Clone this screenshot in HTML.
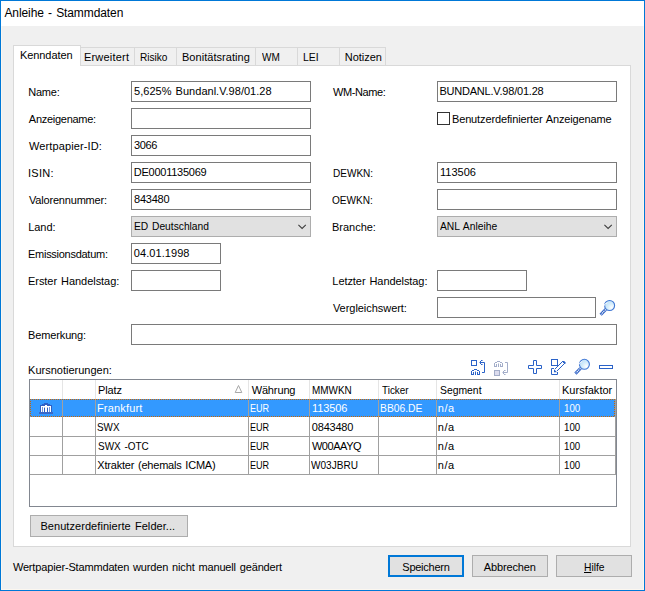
<!DOCTYPE html>
<html lang="de"><head><meta charset="utf-8"><title>Anleihe - Stammdaten</title>
<style>
html,body{margin:0;padding:0;}
body{width:645px;height:591px;position:relative;overflow:hidden;background:#f0f0f0;font-family:"Liberation Sans",sans-serif;font-size:11px;}
.b{position:absolute;box-sizing:border-box;display:block;}
.t{position:absolute;white-space:nowrap;line-height:16px;font-size:11px;transform-origin:0 0;word-spacing:1px;}
</style></head><body>
<div class="b" style="left:0px;top:0px;width:645px;height:591px;background:#f0f0f0;border:1px solid #0078d7;"></div>
<div class="b" style="left:1px;top:26px;width:643px;height:564px;border:1px solid #fcf7ef;border-top:none;"></div>
<div class="b" style="left:1px;top:1px;width:643px;height:25px;background:#fff;"></div>
<div class="b" style="left:13px;top:65px;width:618px;height:482px;background:#fff;border:1px solid #d9d9d9;"></div>
<div class="b" style="left:80px;top:47px;width:55px;height:19px;background:#f0f0f0;border:1px solid #d9d9d9;"></div>
<div class="b" style="left:134px;top:47px;width:43px;height:19px;background:#f0f0f0;border:1px solid #d9d9d9;"></div>
<div class="b" style="left:176px;top:47px;width:80px;height:19px;background:#f0f0f0;border:1px solid #d9d9d9;"></div>
<div class="b" style="left:255px;top:47px;width:43px;height:19px;background:#f0f0f0;border:1px solid #d9d9d9;"></div>
<div class="b" style="left:297px;top:47px;width:43px;height:19px;background:#f0f0f0;border:1px solid #d9d9d9;"></div>
<div class="b" style="left:339px;top:47px;width:47px;height:19px;background:#f0f0f0;border:1px solid #d9d9d9;"></div>
<div class="b" style="left:13px;top:45px;width:68px;height:21px;background:#fff;border:1px solid #d9d9d9;border-bottom:none;"></div>
<div class="b" style="left:131px;top:81px;width:180px;height:21px;background:#fff;border:1px solid #7a7a7a;"></div>
<div class="b" style="left:131px;top:108px;width:180px;height:21px;background:#fff;border:1px solid #7a7a7a;"></div>
<div class="b" style="left:131px;top:135px;width:180px;height:21px;background:#fff;border:1px solid #7a7a7a;"></div>
<div class="b" style="left:131px;top:162px;width:180px;height:21px;background:#fff;border:1px solid #7a7a7a;"></div>
<div class="b" style="left:131px;top:189px;width:180px;height:21px;background:#fff;border:1px solid #7a7a7a;"></div>
<div class="b" style="left:131px;top:216px;width:180px;height:21px;background:#e1e1e1;border:1px solid #adadad;"></div>
<div class="b" style="left:131px;top:243px;width:90px;height:21px;background:#fff;border:1px solid #7a7a7a;"></div>
<div class="b" style="left:131px;top:270px;width:90px;height:21px;background:#fff;border:1px solid #7a7a7a;"></div>
<div class="b" style="left:131px;top:324px;width:486px;height:21px;background:#fff;border:1px solid #7a7a7a;"></div>
<div class="b" style="left:437px;top:81px;width:180px;height:21px;background:#fff;border:1px solid #7a7a7a;"></div>
<div class="b" style="left:437px;top:162px;width:180px;height:21px;background:#fff;border:1px solid #7a7a7a;"></div>
<div class="b" style="left:437px;top:189px;width:180px;height:21px;background:#fff;border:1px solid #7a7a7a;"></div>
<div class="b" style="left:437px;top:216px;width:180px;height:21px;background:#e1e1e1;border:1px solid #adadad;"></div>
<div class="b" style="left:437px;top:270px;width:90px;height:21px;background:#fff;border:1px solid #7a7a7a;"></div>
<div class="b" style="left:437px;top:297px;width:159px;height:21px;background:#fff;border:1px solid #7a7a7a;"></div>
<div class="b" style="left:437px;top:112px;width:13px;height:13px;background:#fff;border:1px solid #333;"></div>
<svg class="b" style="left:297px;top:223px" width="11" height="7" viewBox="0 0 11 7"><path d="M1.4 1.9 L5.1 5.5 L8.8 1.9" fill="none" stroke="#3c3c3c" stroke-width="1.05"/></svg>
<svg class="b" style="left:603px;top:223px" width="11" height="7" viewBox="0 0 11 7"><path d="M1.4 1.9 L5.1 5.5 L8.8 1.9" fill="none" stroke="#3c3c3c" stroke-width="1.05"/></svg>
<div class="b" style="left:29px;top:379px;width:588px;height:128px;background:#fff;border:1px solid #828790;"></div>
<div class="b" style="left:30px;top:399px;width:585px;height:18px;background:#3399ff;"></div>
<div class="b" style="left:30px;top:436px;width:586px;height:1px;background:#a0a0a0;"></div>
<div class="b" style="left:30px;top:455px;width:586px;height:1px;background:#a0a0a0;"></div>
<div class="b" style="left:30px;top:474px;width:586px;height:1px;background:#a0a0a0;"></div>
<div class="b" style="left:62px;top:399px;width:1px;height:76px;background:#a0a0a0;"></div>
<div class="b" style="left:95px;top:399px;width:1px;height:76px;background:#a0a0a0;"></div>
<div class="b" style="left:248px;top:399px;width:1px;height:76px;background:#a0a0a0;"></div>
<div class="b" style="left:309px;top:399px;width:1px;height:76px;background:#a0a0a0;"></div>
<div class="b" style="left:378px;top:399px;width:1px;height:76px;background:#a0a0a0;"></div>
<div class="b" style="left:436px;top:399px;width:1px;height:76px;background:#a0a0a0;"></div>
<div class="b" style="left:559px;top:399px;width:1px;height:76px;background:#a0a0a0;"></div>
<div class="b" style="left:615px;top:399px;width:1px;height:76px;background:#a0a0a0;"></div>
<div class="b" style="left:62px;top:380px;width:1px;height:19px;background:#e5e5e5;"></div>
<div class="b" style="left:95px;top:380px;width:1px;height:19px;background:#e5e5e5;"></div>
<div class="b" style="left:248px;top:380px;width:1px;height:19px;background:#e5e5e5;"></div>
<div class="b" style="left:309px;top:380px;width:1px;height:19px;background:#e5e5e5;"></div>
<div class="b" style="left:378px;top:380px;width:1px;height:19px;background:#e5e5e5;"></div>
<div class="b" style="left:436px;top:380px;width:1px;height:19px;background:#e5e5e5;"></div>
<div class="b" style="left:559px;top:380px;width:1px;height:19px;background:#e5e5e5;"></div>
<div class="b" style="left:30px;top:399px;width:585px;height:1px;background:repeating-linear-gradient(90deg,#cc6600 0,#cc6600 1px,transparent 1px,transparent 2px);"></div>
<div class="b" style="left:31px;top:416px;width:584px;height:1px;background:repeating-linear-gradient(90deg,#cc6600 0,#cc6600 1px,transparent 1px,transparent 2px);"></div>
<div class="b" style="left:30px;top:399px;width:1px;height:18px;background:repeating-linear-gradient(180deg,#cc6600 0,#cc6600 1px,transparent 1px,transparent 2px);"></div>
<div class="b" style="left:614px;top:399px;width:1px;height:18px;background:repeating-linear-gradient(180deg,#cc6600 0,#cc6600 1px,transparent 1px,transparent 2px);"></div>
<svg class="b" style="left:234px;top:384px" width="10" height="10" viewBox="0 0 10 10"><path d="M4.5 1.5 L7.8 8.5 L1.2 8.5 Z" fill="#fff" stroke="#a8a8a8" stroke-width="1"/></svg>
<div class="b" style="left:30px;top:515px;width:158px;height:22px;background:#e1e1e1;border:1px solid #adadad;"></div>
<div class="b" style="left:388px;top:555px;width:76px;height:22px;background:#e1e1e1;border:1px solid #0078d7;border-width:2px;"></div>
<div class="b" style="left:472px;top:555px;width:76px;height:22px;background:#e1e1e1;border:1px solid #adadad;"></div>
<div class="b" style="left:556px;top:555px;width:76px;height:22px;background:#e1e1e1;border:1px solid #adadad;"></div>
<svg class="b" style="left:0;top:0" width="645" height="591" viewBox="0 0 645 591" fill="none">
<defs>
<radialGradient id="lens" cx="0.7" cy="0.72" r="0.75"><stop offset="0" stop-color="#fdfeff"/><stop offset="0.55" stop-color="#d3ecfb"/><stop offset="1" stop-color="#bfe0f8"/></radialGradient>
</defs>
<!-- icon 1: move up -->
<g stroke="#2a62c8" stroke-width="1">
<rect x="471.5" y="360.5" width="5" height="5"/>
<path d="M479.5 362.5H484.5V372.5H482"/><g stroke="none" fill="#2a62c8" shape-rendering="crispEdges"><rect x="480" y="361" width="1" height="1"/><rect x="481" y="360" width="1" height="1"/><rect x="482" y="360" width="1" height="1" opacity="0.55"/><rect x="480" y="363" width="1" height="1"/><rect x="481" y="364" width="1" height="1"/><rect x="482" y="364" width="1" height="1" opacity="0.55"/></g>
<g transform="translate(471 369)"><path d="M3 0.5H6M1 1.5H3M6 1.5H8M0.5 2V6M8.5 2V6M2.5 3V6M4.5 2.5V6M6.5 3V6M0 5.5H3M6 5.5H9"/></g>
</g>
<!-- icon 2: move down (disabled) -->
<g stroke="#a3adc9" stroke-width="1">
<rect x="494.5" y="370.5" width="5" height="5" fill="#dcdcee"/>
<path d="M505 362.5H507.5V372.5H502.5"/><g stroke="none" fill="#a3adc9" shape-rendering="crispEdges"><rect x="503" y="371" width="1" height="1"/><rect x="504" y="370" width="1" height="1"/><rect x="505" y="370" width="1" height="1" opacity="0.55"/><rect x="503" y="373" width="1" height="1"/><rect x="504" y="374" width="1" height="1"/><rect x="505" y="374" width="1" height="1" opacity="0.55"/></g>
<g transform="translate(494 361)"><path d="M3 0.5H6M1 1.5H3M6 1.5H8M0.5 2V6M8.5 2V6M2.5 3V6M4.5 2.5V6M6.5 3V6M0 5.5H3M6 5.5H9"/></g>
</g>
<!-- icon 3: plus -->
<path d="M533.5 360.5H536.5V365.5H541.5V368.5H536.5V373.5H533.5V368.5H528.5V365.5H533.5Z" stroke="#2a62c8"/>
<!-- icon 4: edit -->
<g stroke="#2a62c8" stroke-width="1">
<rect x="551.5" y="359.5" width="6" height="6"/>
<path d="M554 368.5H551.5V374.5H557.5V372"/>
<g fill="#2a62c8" stroke="none" shape-rendering="crispEdges"><rect x="555" y="368" width="1" height="1"/><rect x="556" y="367" width="1" height="1"/><rect x="557" y="366" width="1" height="1"/><rect x="558" y="365" width="1" height="1"/><rect x="559" y="364" width="1" height="1"/><rect x="560" y="363" width="1" height="1"/><rect x="561" y="362" width="1" height="1"/><rect x="562" y="361" width="1" height="1"/><rect x="557" y="370" width="1" height="1"/><rect x="558" y="369" width="1" height="1"/><rect x="559" y="368" width="1" height="1"/><rect x="560" y="367" width="1" height="1"/><rect x="561" y="366" width="1" height="1"/><rect x="562" y="365" width="1" height="1"/><rect x="563" y="364" width="1" height="1"/><rect x="564" y="363" width="1" height="1"/></g>
<path d="M554 372.2V369.2L557 372.2Z" fill="#2a62c8" stroke="none"/>
<path d="M563 360.9L564.2 360.9L565.6 362.4L565.6 363.5L564.6 364L563 362.3Z" fill="#2a62c8" stroke="none"/>
</g>
<!-- icon 5: magnifier -->
<g transform="translate(574 359)"><circle cx="10.4" cy="5.3" r="5" fill="url(#lens)" stroke="#4178d4" stroke-width="1.1"/>
<path d="M4.2 6.6Q5.2 3.2 8.2 2.4" stroke="#fff" stroke-width="1" opacity="0.9"/>
<path d="M6.6 9.2L1.4 14.6" stroke="#2f62c6" stroke-width="3"/>
<path d="M6.5 9.3L1.8 14.2" stroke="#fff" stroke-width="1.1" stroke-dasharray="1.3 0.7"/></g>
<!-- icon 6: minus -->
<rect x="599.5" y="365.5" width="13" height="3" stroke="#2a62c8"/>
<!-- magnifier next to Vergleichswert -->
<g transform="translate(599.2 300.2)"><circle cx="10.4" cy="5.3" r="5" fill="url(#lens)" stroke="#4178d4" stroke-width="1.1"/>
<path d="M4.2 6.6Q5.2 3.2 8.2 2.4" stroke="#fff" stroke-width="1" opacity="0.9"/>
<path d="M6.6 9.2L1.4 14.6" stroke="#2f62c6" stroke-width="3"/>
<path d="M6.5 9.3L1.8 14.2" stroke="#fff" stroke-width="1.1" stroke-dasharray="1.3 0.7"/></g>
<!-- building icon in selected row -->
<g shape-rendering="crispEdges">
<rect x="44" y="403" width="4" height="1" fill="#2f5fc4"/>
<rect x="42" y="404" width="8" height="1" fill="#2f5fc4"/>
<rect x="40" y="405" width="12" height="7" fill="#2f5fc4"/>
<rect x="39" y="412" width="14" height="2" fill="#3a68c8"/>
<g fill="#fff">
<rect x="41" y="406" width="4" height="1"/><rect x="41" y="407" width="1" height="5"/><rect x="43" y="407" width="1" height="5"/><rect x="44" y="407" width="1" height="1" opacity="0.6"/>
<rect x="47" y="406" width="4" height="1"/><rect x="50" y="407" width="1" height="5"/><rect x="48" y="407" width="1" height="5"/><rect x="47" y="407" width="1" height="1" opacity="0.6"/>
<rect x="45" y="405" width="2" height="7"/>
<rect x="42" y="407" width="1" height="5" opacity="0.35"/><rect x="49" y="407" width="1" height="5" opacity="0.35"/>
</g>
</g>
</svg>

<span class="t" id="title" style="left:4.44px;top:5.00px;color:#000;font-size:12px;letter-spacing:-0.098px;">Anleihe - Stammdaten</span>
<span class="t" id="tab1" style="left:19.88px;top:47.00px;color:#000;letter-spacing:-0.051px;">Kenndaten</span>
<span class="t" id="tab2" style="left:83.98px;top:49.00px;color:#000;letter-spacing:0.198px;">Erweitert</span>
<span class="t" id="tab3" style="left:140.01px;top:49.00px;color:#000;transform:scaleX(0.9178);">Risiko</span>
<span class="t" id="tab4" style="left:181.97px;top:49.00px;color:#000;letter-spacing:0.044px;">Bonitätsrating</span>
<span class="t" id="tab5" style="left:261.58px;top:49.00px;color:#000;transform:scaleX(0.9103);">WM</span>
<span class="t" id="tab6" style="left:303.49px;top:49.00px;color:#000;transform:scaleX(0.9485);">LEI</span>
<span class="t" id="tab7" style="left:344.84px;top:49.00px;color:#000;letter-spacing:-0.037px;">Notizen</span>
<span class="t" id="l1" style="left:28.18px;top:84.00px;color:#000;letter-spacing:-0.207px;">Name:</span>
<span class="t" id="l2" style="left:28.85px;top:111.00px;color:#000;letter-spacing:-0.278px;">Anzeigename:</span>
<span class="t" id="l3" style="left:28.97px;top:138.00px;color:#000;letter-spacing:0.113px;">Wertpapier-ID:</span>
<span class="t" id="l4" style="left:28.08px;top:165.00px;color:#000;letter-spacing:0.239px;">ISIN:</span>
<span class="t" id="l5" style="left:28.97px;top:192.00px;color:#000;letter-spacing:-0.186px;">Valorennummer:</span>
<span class="t" id="l6" style="left:28.27px;top:219.00px;color:#000;letter-spacing:-0.080px;">Land:</span>
<span class="t" id="l7" style="left:28.01px;top:246.00px;color:#000;letter-spacing:-0.272px;">Emissionsdatum:</span>
<span class="t" id="l8" style="left:28.01px;top:273.00px;color:#000;letter-spacing:-0.046px;">Erster Handelstag:</span>
<span class="t" id="l9" style="left:28.01px;top:327.00px;color:#000;letter-spacing:-0.128px;">Bemerkung:</span>
<span class="t" id="r1" style="left:333.07px;top:84.00px;color:#000;letter-spacing:-0.417px;">WM-Name:</span>
<span class="t" id="r2" style="left:332.62px;top:165.00px;color:#000;transform:scaleX(0.9128);">DEWKN:</span>
<span class="t" id="r3" style="left:332.28px;top:192.00px;color:#000;transform:scaleX(0.9170);">OEWKN:</span>
<span class="t" id="r4" style="left:332.06px;top:219.00px;color:#000;letter-spacing:-0.023px;">Branche:</span>
<span class="t" id="r5" style="left:332.34px;top:273.00px;color:#000;letter-spacing:-0.069px;">Letzter Handelstag:</span>
<span class="t" id="r6" style="left:332.94px;top:300.00px;color:#000;letter-spacing:-0.046px;">Vergleichswert:</span>
<span class="t" id="v1" style="left:134.12px;top:83.00px;color:#000;letter-spacing:0.020px;">5,625% Bundanl.V.98/01.28</span>
<span class="t" id="v3" style="left:134.08px;top:137.00px;color:#000;letter-spacing:-0.382px;">3066</span>
<span class="t" id="v4" style="left:133.82px;top:164.00px;color:#000;letter-spacing:-0.252px;">DE0001135069</span>
<span class="t" id="v5" style="left:134.11px;top:191.00px;color:#000;letter-spacing:-0.241px;">843480</span>
<span class="t" id="v6" style="left:134.39px;top:218.00px;color:#000;transform:scaleX(0.9312);">ED Deutschland</span>
<span class="t" id="v7" style="left:133.85px;top:245.00px;color:#000;letter-spacing:0.060px;">04.01.1998</span>
<span class="t" id="w1" style="left:439.38px;top:83.00px;color:#000;letter-spacing:-0.206px;">BUNDANL.V.98/01.28</span>
<span class="t" id="w2" style="left:439.98px;top:164.00px;color:#000;letter-spacing:0.026px;">113506</span>
<span class="t" id="w4" style="left:440.13px;top:218.00px;color:#000;transform:scaleX(0.9358);">ANL Anleihe</span>
<span class="t" id="cb" style="left:451.94px;top:111.00px;color:#000;letter-spacing:-0.130px;">Benutzerdefinierter Anzeigename</span>
<span class="t" id="kn" style="left:28.09px;top:362.00px;color:#000;letter-spacing:0.002px;">Kursnotierungen:</span>
<span class="t" id="h1" style="left:97.98px;top:382.00px;color:#000;letter-spacing:-0.118px;">Platz</span>
<span class="t" id="h2" style="left:251.64px;top:382.00px;color:#000;letter-spacing:-0.128px;">Währung</span>
<span class="t" id="h3" style="left:312.44px;top:382.00px;color:#000;transform:scaleX(0.9029);">MMWKN</span>
<span class="t" id="h4" style="left:381.93px;top:382.00px;color:#000;transform:scaleX(0.9020);">Ticker</span>
<span class="t" id="h5" style="left:439.60px;top:382.00px;color:#000;transform:scaleX(0.9429);">Segment</span>
<span class="t" id="h6" style="left:562.00px;top:382.00px;color:#000;letter-spacing:0.013px;">Kursfaktor</span>
<span class="t" id="a1" style="left:96.97px;top:400.00px;color:#fff;letter-spacing:0.177px;">Frankfurt</span>
<span class="t" id="a2" style="left:97.22px;top:419.00px;color:#000;transform:scaleX(0.8971);">SWX</span>
<span class="t" id="a3" style="left:97.68px;top:438.00px;color:#000;transform:scaleX(0.9071);">SWX -OTC</span>
<span class="t" id="a4" style="left:97.36px;top:457.00px;color:#000;letter-spacing:-0.216px;">Xtrakter (ehemals ICMA)</span>
<span class="t" id="b0" style="left:250.47px;top:400.00px;color:#fff;transform:scaleX(0.8251);">EUR</span>
<span class="t" id="e0" style="left:437.87px;top:400.00px;color:#fff;letter-spacing:0.437px;">n/a</span>
<span class="t" id="f0" style="left:563.55px;top:400.00px;color:#fff;transform:scaleX(0.8832);">100</span>
<span class="t" id="b1" style="left:250.47px;top:419.00px;color:#000;transform:scaleX(0.8251);">EUR</span>
<span class="t" id="e1" style="left:437.87px;top:419.00px;color:#000;letter-spacing:0.437px;">n/a</span>
<span class="t" id="f1" style="left:563.55px;top:419.00px;color:#000;transform:scaleX(0.8832);">100</span>
<span class="t" id="b2" style="left:250.47px;top:438.00px;color:#000;transform:scaleX(0.8251);">EUR</span>
<span class="t" id="e2" style="left:437.87px;top:438.00px;color:#000;letter-spacing:0.437px;">n/a</span>
<span class="t" id="f2" style="left:563.55px;top:438.00px;color:#000;transform:scaleX(0.8832);">100</span>
<span class="t" id="b3" style="left:250.47px;top:457.00px;color:#000;transform:scaleX(0.8251);">EUR</span>
<span class="t" id="e3" style="left:437.87px;top:457.00px;color:#000;letter-spacing:0.437px;">n/a</span>
<span class="t" id="f3" style="left:563.55px;top:457.00px;color:#000;transform:scaleX(0.8832);">100</span>
<span class="t" id="c1" style="left:311.94px;top:400.00px;color:#fff;letter-spacing:-0.104px;">113506</span>
<span class="t" id="c2" style="left:311.85px;top:419.00px;color:#000;letter-spacing:-0.217px;">0843480</span>
<span class="t" id="c3" style="left:311.89px;top:438.00px;color:#000;letter-spacing:-0.428px;">W00AAYQ</span>
<span class="t" id="c4" style="left:311.33px;top:457.00px;color:#000;transform:scaleX(0.9150);">W03JBRU</span>
<span class="t" id="d1" style="left:379.68px;top:400.00px;color:#fff;transform:scaleX(0.9385);">BB06.DE</span>
<span class="t" id="bf" style="left:40.38px;top:518.00px;color:#000;letter-spacing:0.063px;">Benutzerdefinierte Felder...</span>
<span class="t" id="st" style="left:12.89px;top:559.00px;color:#000;letter-spacing:-0.158px;">Wertpapier-Stammdaten wurden nicht manuell geändert</span>
<span class="t" id="bt1" style="left:402.31px;top:559.00px;color:#000;letter-spacing:-0.251px;">Speichern</span>
<span class="t" id="bt2" style="left:483.85px;top:559.00px;color:#000;letter-spacing:-0.149px;">Abbrechen</span>
<span class="t" id="bt3" style="left:583.63px;top:559.00px;color:#000;transform:scaleX(0.9352);"><u>H</u>ilfe</span>
</body></html>
